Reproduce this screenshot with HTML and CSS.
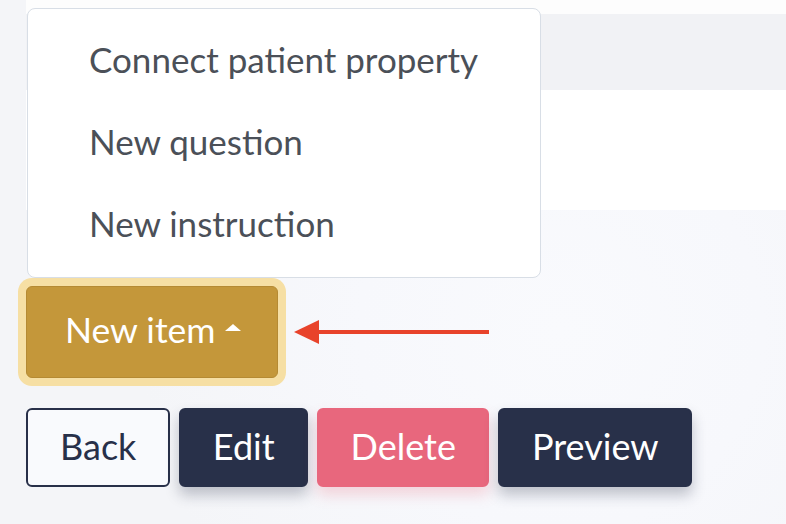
FILE: index.html
```html
<!DOCTYPE html>
<html lang="en">
<head>
<meta charset="utf-8">
<title>Form items</title>
<link rel="stylesheet" href="styles.css">
</head>
<body>
<div class="page">
  <div class="table">
    <div class="row row-white row-top"></div>
    <div class="row row-grey"></div>
    <div class="row row-white row-main"></div>
  </div>

  <div class="toolbar">
    <div class="dropdown-wrap">
      <ul class="dropdown">
        <li class="dropdown-item">Connect patient property</li>
        <li class="dropdown-item">New question</li>
        <li class="dropdown-item">New instruction</li>
      </ul>
      <button class="btn-new">New item<span class="caret"></span></button>
    </div>
    <svg class="pointer-arrow" width="196" height="26" viewBox="0 0 196 26" aria-hidden="true">
      <polygon points="0,13 25,1 25,25" fill="#e8432b"/>
      <rect x="22" y="11" width="173" height="4" fill="#e8432b"/>
    </svg>
  </div>

  <div class="actions">
    <button class="btn btn-outline">Back</button>
    <button class="btn btn-dark">Edit</button>
    <button class="btn btn-danger">Delete</button>
    <button class="btn btn-dark">Preview</button>
  </div>
</div>
</body>
</html>
```

FILE: styles.css
```css
html, body {
  margin: 0;
  padding: 0;
}

body {
  width: 786px;
  height: 524px;
  overflow: hidden;
  background: radial-gradient(circle at 560px 330px, #f9fafd 0, #f7f8fc 200px, #f4f5f8 420px);
  font-family: "Lato", "Noto Sans", sans-serif;
}

.page {
  padding-left: 26px;
}

.table {
  display: flex;
  flex-direction: column;
}

.row-top {
  height: 14px;
  background: #fdfdfd;
}

.row-grey {
  height: 76px;
  background: #f1f2f5;
}

.row-main {
  height: 120px;
  background: #ffffff;
}

.toolbar {
  margin-top: 76px;
  display: flex;
  align-items: center;
  gap: 16px;
}

.dropdown-wrap {
  position: relative;
}

.dropdown {
  position: absolute;
  left: 1px;
  bottom: calc(100% + 8px);
  box-sizing: border-box;
  width: 514px;
  height: 270px;
  margin: 0;
  padding: 11px 0;
  list-style: none;
  background: #ffffff;
  border: 1px solid #d8dee6;
  border-radius: 8px;
  display: flex;
  flex-direction: column;
}

.dropdown-item {
  box-sizing: border-box;
  height: 82px;
  line-height: 78px;
  padding: 0 0 4px 61px;
  font-size: 35px;
  color: #4b5058;
  white-space: nowrap;
}

.btn-new {
  display: flex;
  align-items: center;
  width: 252px;
  height: 92px;
  padding: 0 0 5px 38px;
  border: 1px solid #b58a33;
  border-radius: 6px;
  background: #c4973a;
  color: #ffffff;
  font-family: inherit;
  font-size: 35.5px;
  box-shadow: 0 0 0 8px #f6dfa4;
}

.caret {
  width: 0;
  height: 0;
  margin-left: 10px;
  margin-top: -4px;
  border-left: 8px solid transparent;
  border-right: 8px solid transparent;
  border-bottom: 7px solid #ffffff;
}

.pointer-arrow {
  display: block;
}

.actions {
  margin-top: 30px;
  display: flex;
  gap: 9px;
}

.btn {
  height: 79px;
  padding: 0 31.5px 4px;
  border-radius: 6px;
  border: 2px solid transparent;
  font-family: inherit;
  font-size: 36px;
}

.btn-outline {
  padding-left: 32px;
  padding-right: 32px;
  background: #f9fafd;
  border-color: #283049;
  color: #283049;
}

.btn-dark {
  background: #283049;
  border-color: #283049;
  color: #ffffff;
  box-shadow: 0 8px 14px rgba(40, 48, 73, 0.28);
}

.btn-danger {
  background: #e8677d;
  border-color: #e8677d;
  color: #ffffff;
  box-shadow: 0 8px 14px rgba(232, 103, 125, 0.25);
}
```
